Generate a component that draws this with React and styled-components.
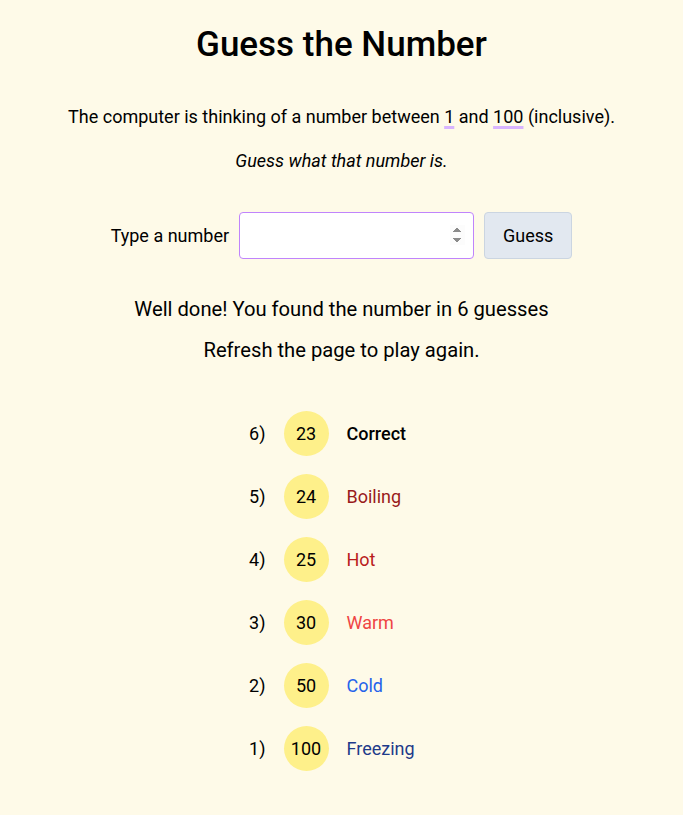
import React from 'react';
import styled, { createGlobalStyle } from 'styled-components';

const GlobalStyle = createGlobalStyle`
  html, body {
    margin: 0;
    background: #fefae8;
    font-family: Roboto, 'Noto Sans', sans-serif;
    color: #000;
  }
`;

const Page = styled.main`
  display: flex;
  flex-direction: column;
  align-items: center;
  padding-top: 21px;
`;

const Title = styled.h1`
  margin: 0;
  font-size: 35px;
  font-weight: 500;
  line-height: 48px;
`;

const Intro = styled.p`
  margin: 35px 0 0;
  font-size: 18px;
  line-height: 26px;
`;

const Mark = styled.span`
  text-decoration: underline;
  text-decoration-color: #d8b4fe;
  text-decoration-thickness: 3px;
  text-underline-offset: 3px;
`;

const Hint = styled.p`
  margin: 18px 0 0;
  font-size: 18px;
  line-height: 26px;
  font-style: italic;
`;

const Form = styled.form`
  display: flex;
  align-items: center;
  gap: 10px;
  margin-top: 38px;
`;

const Label = styled.label`
  font-size: 18px;
`;

const Input = styled.input`
  box-sizing: border-box;
  width: 235px;
  height: 47px;
  border: 1px solid #c084fc;
  border-radius: 4px;
  background: #fff;
  font-size: 18px;
  font-family: inherit;
  padding: 0 8px;

  &::-webkit-inner-spin-button {
    opacity: 1;
  }
`;

const Button = styled.button`
  box-sizing: border-box;
  height: 47px;
  padding: 0 18px;
  background: #e2e8f0;
  border: 1px solid #cbd5e1;
  border-radius: 4px;
  font-size: 18px;
  font-family: inherit;
  color: #000;
`;

const Message = styled.p`
  margin: ${p => (p.first ? '37px' : '15px')} 0 0;
  font-size: 20.2px;
  line-height: 26px;
`;

const Guesses = styled.ol`
  list-style: none;
  margin: 48px 0 0;
  padding: 0;
  display: flex;
  flex-direction: column;
  gap: 18px;
  width: 222px;
`;

const Row = styled.li`
  display: grid;
  grid-template-columns: 35px 45px 1fr;
  align-items: center;
  column-gap: 18px;
  font-size: 18px;
`;

const Index = styled.span`
  text-align: right;
`;

const Bubble = styled.span`
  width: 45px;
  height: 45px;
  border-radius: 50%;
  background: #fef08a;
  display: flex;
  align-items: center;
  justify-content: center;
`;

const Verdict = styled.span`
  color: ${p => p.color};
  font-weight: ${p => (p.bold ? 500 : 400)};
`;

const guesses = [
  { n: 6, value: 23, label: 'Correct', color: '#000', bold: true },
  { n: 5, value: 24, label: 'Boiling', color: '#991b1b' },
  { n: 4, value: 25, label: 'Hot', color: '#b91c1c' },
  { n: 3, value: 30, label: 'Warm', color: '#ef4444' },
  { n: 2, value: 50, label: 'Cold', color: '#2563eb' },
  { n: 1, value: 100, label: 'Freezing', color: '#1e3a8a' },
];

export default function App() {
  return (
    <>
      <GlobalStyle />
      <Page>
        <Title>Guess the Number</Title>
        <Intro>
          The computer is thinking of a number between <Mark>1</Mark> and <Mark>100</Mark> (inclusive).
        </Intro>
        <Hint>Guess what that number is.</Hint>
        <Form onSubmit={e => e.preventDefault()}>
          <Label htmlFor="guess">Type a number</Label>
          <Input id="guess" type="number" min="1" max="100" />
          <Button type="submit">Guess</Button>
        </Form>
        <Message first>Well done! You found the number in 6 guesses</Message>
        <Message>Refresh the page to play again.</Message>
        <Guesses>
          {guesses.map(g => (
            <Row key={g.n}>
              <Index>{g.n})</Index>
              <Bubble>{g.value}</Bubble>
              <Verdict color={g.color} bold={g.bold}>{g.label}</Verdict>
            </Row>
          ))}
        </Guesses>
      </Page>
    </>
  );
}
